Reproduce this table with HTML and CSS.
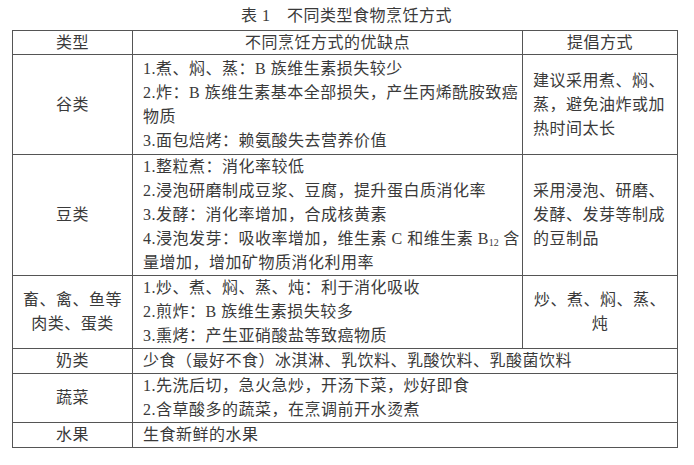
FILE: index.html
```html
<!DOCTYPE html>
<html lang="zh-CN">
<head>
<meta charset="utf-8">
<link rel="stylesheet" href="styles.css">
</head>
<body>
<div class="page">
  <div class="caption">表 1　不同类型食物烹饪方式</div>
  <table class="tbl">
    <colgroup>
      <col class="c1"><col class="c2"><col class="c3">
    </colgroup>
    <thead>
      <tr><th>类型</th><th>不同烹饪方式的优缺点</th><th>提倡方式</th></tr>
    </thead>
    <tbody>
      <tr class="r-grain">
        <td class="type">谷类</td>
        <td>1.煮、焖、蒸：B 族维生素损失较少<br>2.炸：B 族维生素基本全部损失，产生丙烯酰胺致癌<br>物质<br>3.面包焙烤：赖氨酸失去营养价值</td>
        <td>建议采用煮、焖、蒸，避免油炸或加热时间太长</td>
      </tr>
      <tr>
        <td class="type">豆类</td>
        <td>1.整粒煮：消化率较低<br>2.浸泡研磨制成豆浆、豆腐，提升蛋白质消化率<br>3.发酵：消化率增加，合成核黄素<br>4.浸泡发芽：吸收率增加，维生素 C 和维生素 B<span class="sub">12</span> 含<br>量增加，增加矿物质消化利用率</td>
        <td>采用浸泡、研磨、发酵、发芽等制成的豆制品</td>
      </tr>
      <tr>
        <td class="type">畜、禽、鱼等<br>肉类、蛋类</td>
        <td>1.炒、煮、焖、蒸、炖：利于消化吸收<br>2.煎炸：B 族维生素损失较多<br>3.熏烤：产生亚硝酸盐等致癌物质</td>
        <td class="center">炒、煮、焖、蒸、<br>炖</td>
      </tr>
      <tr>
        <td class="type">奶类</td>
        <td colspan="2">少食（最好不食）冰淇淋、乳饮料、乳酸饮料、乳酸菌饮料</td>
      </tr>
      <tr>
        <td class="type">蔬菜</td>
        <td colspan="2">1.先洗后切，急火急炒，开汤下菜，炒好即食<br>2.含草酸多的蔬菜，在烹调前开水烫煮</td>
      </tr>
      <tr>
        <td class="type">水果</td>
        <td colspan="2">生食新鲜的水果</td>
      </tr>
    </tbody>
  </table>
</div>
</body>
</html>
```

FILE: styles.css
```css
html, body {
  margin: 0;
  padding: 0;
  background: #ffffff;
}
body {
  font-family: "Liberation Serif", "Noto Sans CJK SC", serif;
  color: #3a3a3a;
  font-size: 16px;
  letter-spacing: 0.5px;
}
.page {
  padding: 4px 0 0 12px;
  width: 665px;
}
.caption {
  text-align: center;
  line-height: 24px;
  height: 26px;
  padding-left: 4px;
}
.tbl {
  border-collapse: collapse;
  table-layout: fixed;
  width: 665px;
}
.c1 { width: 120px; }
.c2 { width: 390px; }
.c3 { width: 155px; }
.tbl th, .tbl td {
  border: 1px solid #555555;
  line-height: 24px;
  padding: 0 0 0 10px;
  vertical-align: middle;
  text-align: left;
  font-weight: normal;
  white-space: nowrap;
}
.tbl td:last-child {
  white-space: normal;
  padding-right: 6px;
}
.tbl td[colspan] {
  white-space: nowrap;
}
.tbl th {
  text-align: center;
  padding: 0;
  line-height: 23px;
}
.tbl td.type {
  text-align: center;
  padding: 0 4px;
}
.tbl td.center {
  text-align: center;
  padding: 0 4px;
}
.r-grain td {
  padding-top: 2px;
  padding-bottom: 1px;
}
.sub {
  font-size: 10px;
  letter-spacing: 0;
  vertical-align: -2px;
  line-height: 0;
}
```
